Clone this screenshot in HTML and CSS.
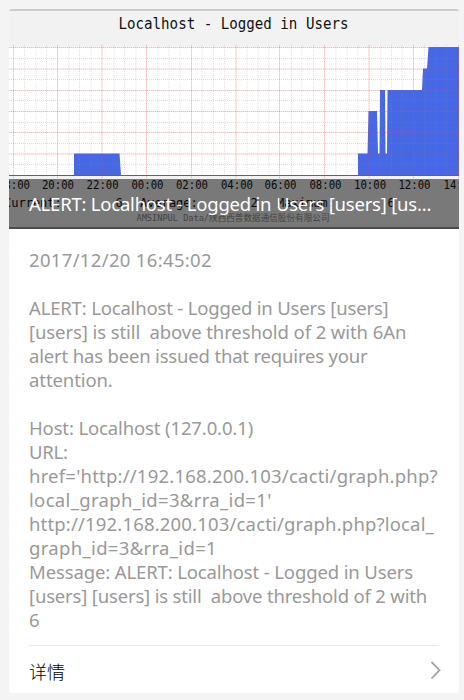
FILE: index.html
```
<!DOCTYPE html>
<html lang="zh-CN">
<head>
<meta charset="utf-8">
<title>Alert</title>
<link rel="stylesheet" href="styles.css">
</head>
<body>
<article class="card">
  <header class="cover">
    <svg class="chart" width="450" height="220" viewBox="9 9 450 220">
      <defs>
        <clipPath id="plot"><rect x="9" y="45" width="450" height="133"/></clipPath>
      </defs>
      <rect x="9" y="9" width="450" height="220" fill="#f2f2f2"/>
      <rect x="9" y="9" width="450" height="2" fill="#ccc"/>
      <rect x="9" y="47" width="450" height="128" fill="#fff"/>
      <path fill="#4668e4" d="M74 175V153.500H119.500L121 175ZM358 175V153.500H367.500L368.500 111H377L378 153.500H379.500L380 90H385L385.500 153.500H387L387.500 90H422L423 68.500H427L428.500 47H459V175Z"/>
      <g class="minor" clip-path="url(#plot)">
        <path d="M9 58.500H459M9 79.500H459M9 100.500H459M9 122.500H459M9 143.500H459M9 164.500H459"/>
        <path d="M24.500 45V177M36 45V177M46.500 45V177M69 45V177M79.500 45V177M91 45V177M114 45V177M124.500 45V177M136 45V177M158 45V177M169 45V177M180 45V177M202 45V177M213.500 45V177M224.500 45V177M247 45V177M258 45V177M269 45V177M291.500 45V177M302 45V177M313.500 45V177M336 45V177M347 45V177M358 45V177M381 45V177M391.500 45V177M402 45V177M424.500 45V177M435.500 45V177M446.500 45V177"/>
      </g>
      <g clip-path="url(#plot)">
        <path id="major" class="major-base" d="M9 47.500H459M9 69H459M9 90.500H459M9 111.500H459M9 132.500H459M9 154H459M13.500 45V178M57.500 45V178M102 45V178M146.500 45V178M191.500 45V178M236 45V178M279.500 45V178M324.500 45V178M369 45V178M413.500 45V178M458.500 45V178"/>
        <path class="major-dots" d="M9 47.500H459M9 69H459M9 90.500H459M9 111.500H459M9 132.500H459M9 154H459M13.500 45V178M57.500 45V178M102 45V178M146.500 45V178M191.500 45V178M236 45V178M279.500 45V178M324.500 45V178M369 45V178M413.500 45V178M458.500 45V178"/>
      </g>
      <path d="M9 175.500H459" stroke="#655f66" stroke-width="1.200"/>
      <text class="chart-title" x="118.500" y="29" textLength="230" lengthAdjust="spacingAndGlyphs">Localhost - Logged in Users</text>
      <g class="ticks" transform="translate(0 188.500) scale(.92 1)">
        <text x="15.200">18:00</text><text x="63">20:00</text><text x="111.600">22:00</text><text x="160.300">00:00</text><text x="208.700">02:00</text><text x="257.600">04:00</text><text x="304.900">06:00</text><text x="353.800">08:00</text><text x="402.200">10:00</text><text x="450.500">12:00</text><text x="499.500">14:00</text>
      </g>
      <g class="legend">
        <text x="4" y="206.500">Current:</text><text x="115.500" y="206.500">6</text><text x="140" y="206.500">Average:</text><text x="250.500" y="206.500">2</text><text x="277" y="206.500">Maximum:</text><text x="387.500" y="206.500">6</text>
      </g>
      <text class="owner" x="136.500" y="220.500" textLength="193">AMSINPUL Data/陕西西普数据通信股份有限公司</text>
      <rect x="9" y="227" width="450" height="2" fill="#999"/>
    </svg>
    <h1 class="caption"><span class="tight-4">ALERT: Localhost - Logged in Users [users] [us...</span></h1>
  </header>
  <div class="body">
    <p><span class="loose-3">2017/12/20 16:45:02</span></p>
    <p><span class="tight-3">ALERT: Localhost - Logged in Users [users]</span>
<span class="tight-1">[users] is still  above threshold of 2 with 6An</span>
<span class="tight-3">alert has been issued that requires your</span>
<span class="tight-1">attention.</span></p>
    <p><span class="tight-2">Host: Localhost (127.0.0.1)</span>
<span class="tight-4">URL:</span>
<span class="loose-2">href='http://192.168.200.103/cacti/graph.php?</span>
<span class="loose-3">local_graph_id=3&amp;rra_id=1'</span>
<span class="loose-1">http://192.168.200.103/cacti/graph.php?local_</span>
<span class="loose-3">graph_id=3&amp;rra_id=1</span>
<span class="tight-2">Message: ALERT: Localhost - Logged in Users</span>
<span class="tight-3">[users] [users] is still  above threshold of 2 with</span>
<span>6</span></p>
  </div>
  <footer class="more">
    <span>详情</span>
    <svg class="chevron" width="12" height="20" viewBox="0 0 12 20"><path d="M1.500 1L9.500 9.200L1.500 17.500" fill="none" stroke="#a3a3a3" stroke-width="1.800"/></svg>
  </footer>
</article>
</body>
</html>
```
FILE: styles.css
```
* { box-sizing: border-box; }
body {
  margin: 0;
  padding: 9px 5px 7px 9px;
  background: #f4f4f4;
  font-family: "Noto Sans", "Noto Sans CJK SC", sans-serif;
}
.card {
  width: 450px;
  height: 684px;
  background: #fff;
  border-radius: 3px;
  overflow: hidden;
}
.cover { position: relative; height: 220px; }
.chart { display: block; }
.chart text { font-family: "DejaVu Sans Mono", "Noto Sans CJK SC", monospace; fill: #111; }
.chart .chart-title { font-size: 15px; }
.chart .ticks text { font-size: 11.600px; text-anchor: middle; }
.chart .legend text { font-size: 12px; }
.chart .owner { font-size: 8.600px; fill: #888; }
.minor { stroke: #888; stroke-opacity: .27; stroke-dasharray: 1 1; }
.major-base { stroke: #f44; stroke-opacity: .16; fill: none; }
.major-dots { stroke: #e44; stroke-opacity: .25; stroke-dasharray: 1 1; fill: none; }
.caption {
  position: absolute;
  inset: auto 0 0;
  height: 50px;
  margin: 0;
  padding: 0 20px;
  background: rgba(0, 0, 0, .5);
  color: #fff;
  font-size: 18.500px;
  font-weight: 400;
  line-height: 49px;
  white-space: pre;
}
.body {
  margin: 0 20px;
  padding-top: 19px;
  height: 417px;
  border-bottom: 1px solid #e9e9e9;
  color: #999;
  font-size: 18.500px;
  line-height: 24px;
}
.body p { margin: 0 0 24px; white-space: pre; }
.tight-1 { letter-spacing: -.09px; }
.tight-2 { letter-spacing: -.13px; }
.tight-3 { letter-spacing: -.175px; }
.tight-4 { letter-spacing: -.22px; }
.loose-1 { letter-spacing: .17px; }
.loose-2 { letter-spacing: .21px; }
.loose-3 { letter-spacing: .33px; }
.more {
  display: flex;
  justify-content: space-between;
  align-items: center;
  height: 47px;
  padding: 3px 17px 0 20px;
  color: #000;
  font: 300 18px/24px "Noto Sans CJK SC", sans-serif;
}
```
